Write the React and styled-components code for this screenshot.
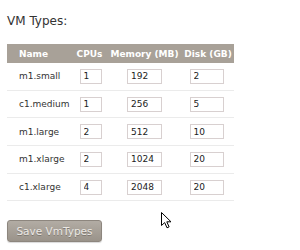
import React from 'react';
import styled, { createGlobalStyle } from 'styled-components';

const GlobalStyle = createGlobalStyle`
  html, body {
    margin: 0;
    padding: 0;
    background: #fff;
    font-family: "DejaVu Sans", sans-serif;
  }
`;

const Page = styled.div`
  position: relative;
  width: 300px;
  height: 250px;
  padding: 14px 7px 0;
  box-sizing: border-box;
`;

const Title = styled.h2`
  margin: 0;
  font-size: 12px;
  font-weight: normal;
  line-height: 14px;
  color: #333;
`;

const Table = styled.div`
  margin-top: 16px;
  width: 227px;
  display: grid;
  grid-template-columns: 65px 35px 75px 52px;
`;

const HeadCell = styled.div`
  height: 19px;
  background: #a8a198;
  color: #fff;
  font-size: 9px;
  font-weight: bold;
  display: flex;
  align-items: center;
  white-space: nowrap;
  justify-content: ${p => (p.$left ? 'flex-start' : 'center')};
  padding-left: ${p => (p.$left ? '12px' : '0')};
`;

const Cell = styled.div`
  height: 27.7px;
  box-sizing: border-box;
  border-bottom: 1px solid #ebebeb;
  display: flex;
  align-items: center;
  font-size: 9px;
  color: #333;
  justify-content: ${p => (p.$left ? 'flex-start' : 'center')};
  padding-left: ${p => (p.$left ? '12px' : '0')};
`;

const Field = styled.input`
  width: ${p => p.$w}px;
  height: 15px;
  box-sizing: border-box;
  border: 1px solid #d8d0d0;
  padding: 0 0 0 3px;
  margin: 0 0 0 ${p => p.$shift || 0}px;
  font-family: "DejaVu Sans", sans-serif;
  font-size: 9px;
  color: #222;
  background: #fff;
  outline: none;
`;

const SaveButton = styled.button`
  margin-top: 19px;
  width: 95px;
  height: 22px;
  border: 1px solid #8d867e;
  border-radius: 3px;
  background: linear-gradient(#b2aca4, #9a938a);
  color: #ebe8e4;
  font-family: "DejaVu Sans", sans-serif;
  font-size: 10.5px;
  text-shadow: 0 1px 0 rgba(0, 0, 0, 0.25);
  padding: 0;
  box-shadow: 0 1px 1px rgba(0, 0, 0, 0.15);
`;

const Cursor = styled.svg`
  position: absolute;
  left: 161px;
  top: 212px;
`;

const vmTypes = [
  { name: 'm1.small', cpus: 1, mem: 192, disk: 2 },
  { name: 'c1.medium', cpus: 1, mem: 256, disk: 5 },
  { name: 'm1.large', cpus: 2, mem: 512, disk: 10 },
  { name: 'm1.xlarge', cpus: 2, mem: 1024, disk: 20 },
  { name: 'c1.xlarge', cpus: 4, mem: 2048, disk: 20 }
];

export default function App() {
  return (
    <Page>
      <GlobalStyle />
      <Title>VM Types:</Title>
      <Table>
        <HeadCell $left>Name</HeadCell>
        <HeadCell>CPUs</HeadCell>
        <HeadCell>Memory (MB)</HeadCell>
        <HeadCell>Disk (GB)</HeadCell>
        {vmTypes.map(t => (
          <React.Fragment key={t.name}>
            <Cell $left>{t.name}</Cell>
            <Cell><Field $w={22} $shift={2} defaultValue={t.cpus} /></Cell>
            <Cell><Field $w={35} defaultValue={t.mem} /></Cell>
            <Cell><Field $w={34} $shift={-3} defaultValue={t.disk} /></Cell>
          </React.Fragment>
        ))}
      </Table>
      <SaveButton>Save VmTypes</SaveButton>
      <Cursor width="12" height="18" viewBox="0 0 12 18">
        <path d="M0.5 0.5 L0.5 13.5 L3.7 10.6 L6 15.8 L8.1 14.9 L5.8 9.8 L10 9.8 Z" fill="#fff" stroke="#000" strokeWidth="1" strokeLinejoin="miter" />
      </Cursor>
    </Page>
  );
}
